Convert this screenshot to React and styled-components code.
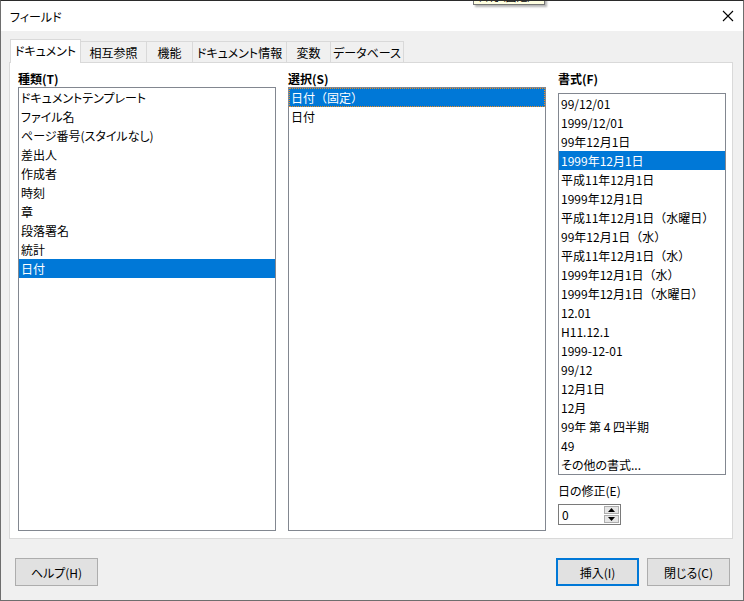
import React from 'react'
import styled, { createGlobalStyle } from 'styled-components'

const GlobalStyle = createGlobalStyle`
    body {
        margin: 0;
        font-family: "Noto Sans CJK JP", "Noto Sans", sans-serif;
        font-size: 12px;
        color: #000;
        font-feature-settings: "palt";
    }
`

const kinds = [
    'ドキュメントテンプレート',
    'ファイル名',
    'ページ番号(スタイルなし)',
    '差出人',
    '作成者',
    '時刻',
    '章',
    '段落署名',
    '統計',
    '日付',
]

const formats = [
    '99/12/01',
    '1999/12/01',
    '99年12月1日',
    '1999年12月1日',
    '平成11年12月1日',
    '1999年12月1日',
    '平成11年12月1日（水曜日）',
    '99年12月1日（水）',
    '平成11年12月1日（水）',
    '1999年12月1日（水）',
    '1999年12月1日（水曜日）',
    '12.01',
    'H11.12.1',
    '1999-12-01',
    '99/12',
    '12月1日',
    '12月',
    '99年 第 4 四半期',
    '49',
    'その他の書式...',
]

const tabs = [
    { label: 'ドキュメント', w: 71, active: true },
    { label: '相互参照', w: 67 },
    { label: '機能', w: 47 },
    { label: 'ドキュメント情報', w: 95 },
    { label: '変数', w: 45 },
    { label: 'データベース', w: 74 },
]

// full-width brackets keep their width, everything else is set proportional
const hasWideParen = s => /[（）]/.test(s)

function App() {
    return (
        <>
            <GlobalStyle />
            <Window>
                <Tooltip>日付（固定）</Tooltip>

                <TitleBar>
                    <span>フィールド</span>
                    <CloseButton>
                        <svg width="12" height="12" viewBox="0 0 12 12">
                            <path d="M1 1 L11 11 M11 1 L1 11" stroke="#000" strokeWidth="1.1" fill="none" />
                        </svg>
                    </CloseButton>
                </TitleBar>

                <Body>
                    <TabRow>
                        {tabs.map(t => (
                            <Tab key={t.label} $w={t.w} $active={t.active}>{t.label}</Tab>
                        ))}
                    </TabRow>

                    <Panel>
                        <Column $w={258}>
                            <Label>種類(T)</Label>
                            <ListBox>
                                {kinds.map(k => (
                                    <Item key={k} $selected={k === '日付'}>{k}</Item>
                                ))}
                            </ListBox>
                        </Column>

                        <Column $w={258}>
                            <Label>選択(S)</Label>
                            <ListBox>
                                <Item $selected $focus $wide>日付（固定）</Item>
                                <Item>日付</Item>
                            </ListBox>
                        </Column>

                        <Column $w={168}>
                            <Label>書式(F)</Label>
                            <FormatList>
                                {formats.map((f, i) => (
                                    <Item key={i} $selected={i === 3} $wide={hasWideParen(f)}>{f}</Item>
                                ))}
                            </FormatList>
                            <SubLabel>日の修正(E)</SubLabel>
                            <SpinBox>
                                <span>0</span>
                                <SpinButtons>
                                    <SpinButton>
                                        <svg width="7" height="4" viewBox="0 0 7 4"><path d="M0 4 L3.5 0 L7 4 Z" fill="#000" /></svg>
                                    </SpinButton>
                                    <SpinButton>
                                        <svg width="7" height="4" viewBox="0 0 7 4"><path d="M0 0 L3.5 4 L7 0 Z" fill="#000" /></svg>
                                    </SpinButton>
                                </SpinButtons>
                            </SpinBox>
                        </Column>
                    </Panel>

                    <ButtonRow>
                        <Button>ヘルプ(H)</Button>
                        <ButtonGroup>
                            <Button $default>挿入(I)</Button>
                            <Button>閉じる(C)</Button>
                        </ButtonGroup>
                    </ButtonRow>
                </Body>
            </Window>
        </>
    )
}

export default App

const Window = styled.div`
    position: relative;
    width: 744px;
    height: 601px;
    box-sizing: border-box;
    border: 1px solid #6e6e6e;
    border-top-color: #2b2b2b;
    background-color: #f0f0f0;
    display: flex;
    flex-direction: column;
    overflow: hidden;
`

const Tooltip = styled.div`
    position: absolute;
    top: -13px;
    left: 472px;
    width: 72px;
    height: 17px;
    box-sizing: border-box;
    padding: 0 4px;
    background-color: #ffffe1;
    border: 1px solid #767676;
    box-shadow: 2px 2px 2px rgba(0, 0, 0, 0.3);
    font-size: 11px;
    line-height: 15px;
    white-space: nowrap;
    overflow: hidden;
    z-index: 5;
`

const TitleBar = styled.div`
    display: flex;
    align-items: center;
    justify-content: space-between;
    height: 30px;
    padding-left: 9px;
    background-color: #fff;
    font-size: 12px;
`

const CloseButton = styled.div`
    display: flex;
    align-items: center;
    justify-content: center;
    width: 30px;
    height: 30px;
`

const Body = styled.div`
    flex: 1;
    display: flex;
    flex-direction: column;
    padding: 8px 10px 0 8px;
`

const TabRow = styled.div`
    display: flex;
    align-items: flex-end;
    height: 23px;
    padding-left: 1px;
    position: relative;
    z-index: 1;
`

const Tab = styled.div`
    box-sizing: border-box;
    width: ${p => p.$w}px;
    height: ${p => (p.$active ? 24 : 21)}px;
    margin-bottom: ${p => (p.$active ? -1 : 0)}px;
    margin-left: -1px;
    &:first-child {
        margin-left: 0;
    }
    display: flex;
    align-items: center;
    justify-content: center;
    padding-bottom: ${p => (p.$active ? 2 : 0)}px;
    border: 1px solid #d9d9d9;
    border-bottom: none;
    background-color: ${p => (p.$active ? '#fff' : '#f0f0f0')};
    position: relative;
    z-index: ${p => (p.$active ? 2 : 1)};
    white-space: nowrap;
`

const Panel = styled.div`
    box-sizing: border-box;
    height: 477px;
    display: flex;
    gap: 12px;
    padding: 8px 6px 7px 8px;
    background-color: #fff;
    border: 1px solid #d9d9d9;
`

const Column = styled.div`
    width: ${p => p.$w}px;
    display: flex;
    flex-direction: column;
`

const Label = styled.div`
    height: 16px;
    line-height: 16px;
    font-weight: 700;
`

const SubLabel = styled.div`
    margin-top: 8px;
    height: 16px;
    line-height: 16px;
`

const ListBox = styled.div`
    flex: 1;
    box-sizing: border-box;
    border: 1px solid #828790;
    background-color: #fff;
    overflow: hidden;
`

const FormatList = styled(ListBox)`
    flex: none;
    height: 382px;
    margin-top: 6px;
`

const Item = styled.div`
    height: 19px;
    line-height: 19px;
    padding-left: 2px;
    white-space: nowrap;
    font-feature-settings: ${p => (p.$wide ? 'normal' : '"palt"')};
    background-color: ${p => (p.$selected ? '#0078d7' : 'transparent')};
    color: ${p => (p.$selected ? '#fff' : '#000')};
    outline: ${p => (p.$focus ? '1px dotted #f08c1e' : 'none')};
    outline-offset: -1px;
`

const SpinBox = styled.div`
    box-sizing: border-box;
    margin-top: 5px;
    width: 63px;
    height: 21px;
    display: flex;
    align-items: center;
    justify-content: space-between;
    padding: 0 1px 0 3px;
    border: 1px solid #7a7a7a;
    background-color: #fff;
`

const SpinButtons = styled.div`
    display: flex;
    flex-direction: column;
    gap: 1px;
`

const SpinButton = styled.div`
    box-sizing: border-box;
    width: 15px;
    height: 8px;
    display: flex;
    align-items: center;
    justify-content: center;
    border: 1px solid #adadad;
    background-color: #e5e5e5;
`

const ButtonRow = styled.div`
    display: flex;
    justify-content: space-between;
    margin-top: 19px;
    padding: 0 3px 0 6px;
`

const ButtonGroup = styled.div`
    display: flex;
    gap: 8px;
`

const Button = styled.div`
    box-sizing: border-box;
    width: 83px;
    height: 28px;
    display: flex;
    align-items: center;
    justify-content: center;
    background-color: #e1e1e1;
    border: ${p => (p.$default ? '2px solid #0078d7' : '1px solid #adadad')};
`
